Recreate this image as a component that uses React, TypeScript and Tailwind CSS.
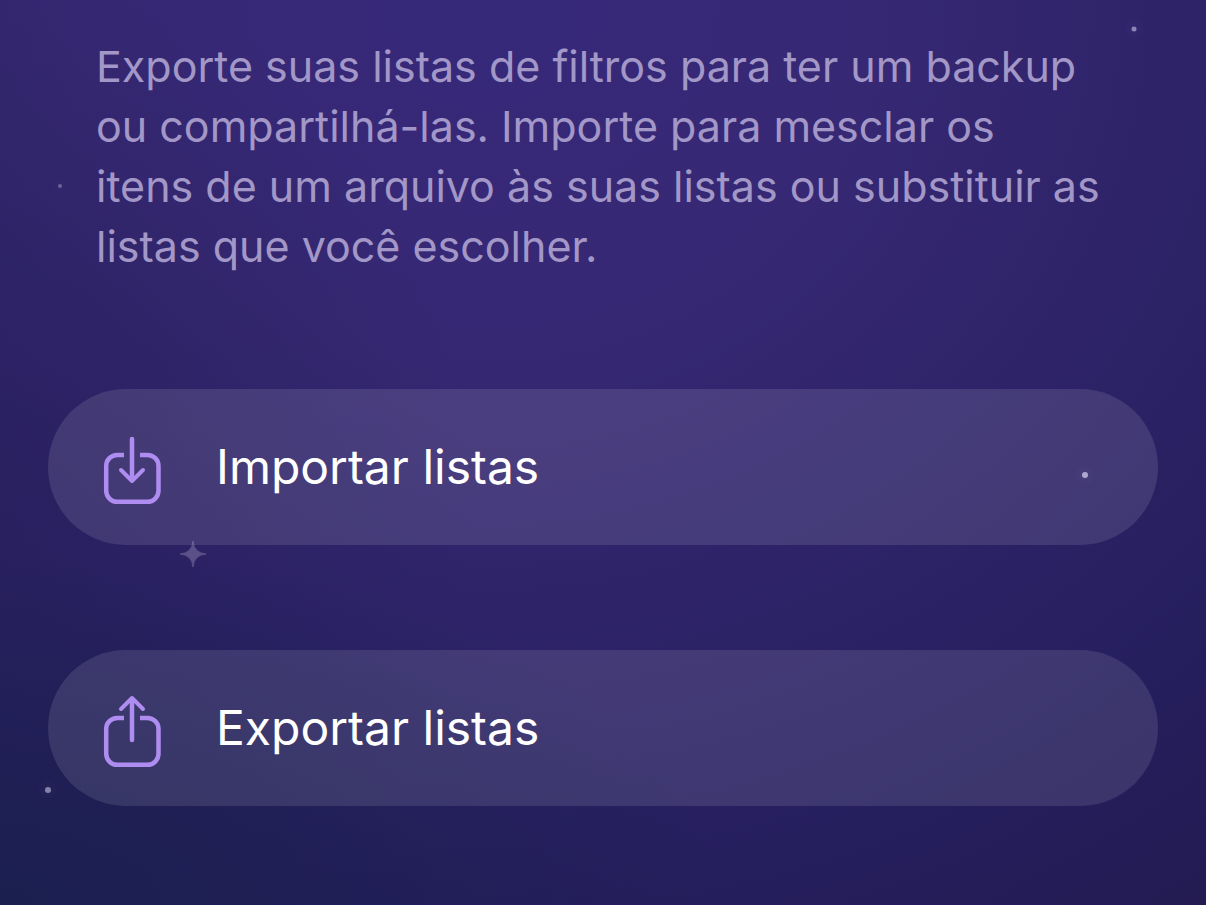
interface ActionButtonProps {
  label: string;
  icon: React.ReactNode;
}

const DOTS = [
  { x: 94, y: 3.25, size: 5, opacity: 0.55 },
  { x: 5, y: 20.6, size: 4, opacity: 0.35 },
  { x: 90, y: 52.5, size: 6, opacity: 0.7 },
  { x: 4, y: 87.3, size: 6, opacity: 0.55 },
];

function ImportIcon() {
  return (
    <svg className="h-20 w-15 shrink-0" viewBox="0 0 60 80" fill="none" stroke="#ae8cf0" strokeWidth="4.5" aria-hidden="true">
      <path d="M22 27.9H15.2a11 11 0 0 0-11 11v24.9a11 11 0 0 0 11 11h30.3a11 11 0 0 0 11-11V38.9a11 11 0 0 0-11-11H38" />
      <path d="M30 12v41" strokeLinecap="round" />
      <path d="M19 43l11 11 11-11" strokeWidth="4" strokeLinecap="round" strokeLinejoin="round" />
    </svg>
  );
}

function ExportIcon() {
  return (
    <svg className="h-20 w-15 shrink-0" viewBox="0 0 60 80" fill="none" stroke="#ae8cf0" strokeWidth="4.5" aria-hidden="true">
      <path d="M22 29.9H15.2a11 11 0 0 0-11 11v24.9a11 11 0 0 0 11 11h30.3a11 11 0 0 0 11-11V40.9a11 11 0 0 0-11-11H38" />
      <path d="M30 52V11" strokeLinecap="round" />
      <path d="M19 21l11-11 11 11" strokeWidth="4" strokeLinecap="round" strokeLinejoin="round" />
    </svg>
  );
}

function ActionButton({ label, icon }: ActionButtonProps) {
  return (
    <button
      type="button"
      className="flex w-full items-center gap-[54px] rounded-full bg-white/11 pt-[38px] pr-12 pb-[38px] pl-[54px] text-left text-[48px] leading-[60px] text-white"
    >
      {icon}
      <span>{label}</span>
    </button>
  );
}

function Stars() {
  return (
    <div className="pointer-events-none absolute inset-0" aria-hidden="true">
      {DOTS.map((dot) => (
        <span
          key={`${dot.x}-${dot.y}`}
          className="absolute -translate-x-1/2 -translate-y-1/2 rounded-full bg-[#d9d2f5] shadow-[0_0_10px_2px_rgba(217,210,245,0.15)]"
          style={{
            left: `${dot.x}%`,
            top: `${dot.y}%`,
            width: dot.size,
            height: dot.size,
            opacity: dot.opacity,
          }}
        />
      ))}
      <svg className="absolute top-[61.2%] left-[16%] size-[26px] -translate-x-1/2 -translate-y-1/2" viewBox="0 0 26 26">
        <path d="M13 0Q14 12 26 13Q14 14 13 26Q12 14 0 13Q12 12 13 0Z" fill="#5c5088" stroke="#5c5088" />
      </svg>
    </div>
  );
}

export default function App() {
  return (
    <main className="relative min-h-screen bg-[radial-gradient(ellipse_60%_40%_at_0%_100%,#1b1f50_0%,#1b1f5000_100%),radial-gradient(ellipse_40%_60%_at_0%_55%,#251e5880_0%,#251e5800_100%),radial-gradient(ellipse_110%_130%_at_40%_0%,#37297a_0%,#362873_30%,#2e2369_52%,#251e5c_78%,#221a4e_100%)] px-12 pt-9 pb-[99px] font-['Inter',sans-serif]">
      <Stars />
      <div className="relative">
        <p className="px-12 text-[43px] leading-[60px] text-[#a297c7]">
          Exporte suas listas de filtros para ter um backup
          <br />
          ou compartilhá-las. Importe para mesclar os
          <br />
          itens de um arquivo às suas listas ou substituir as
          <br />
          listas que você escolher.
        </p>
        <div className="mt-[113px] flex flex-col gap-[105px]">
          <ActionButton label="Importar listas" icon={<ImportIcon />} />
          <ActionButton label="Exportar listas" icon={<ExportIcon />} />
        </div>
      </div>
    </main>
  );
}
